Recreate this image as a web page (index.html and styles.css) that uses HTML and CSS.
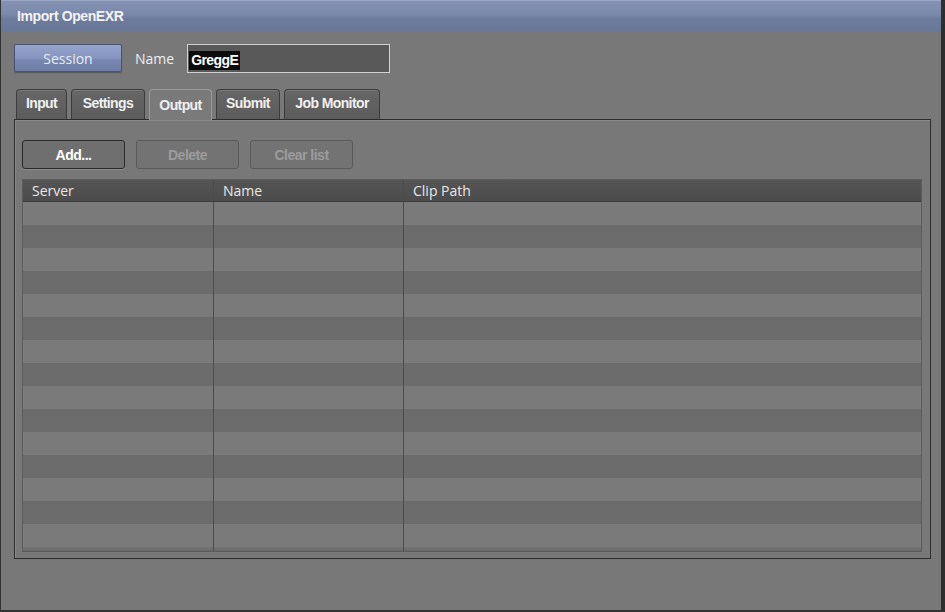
FILE: index.html
```html
<!DOCTYPE html>
<html>
  <head>
    <title>Import OpenEXR</title>
    <link rel="stylesheet" href="styles.css">
  </head>
  <body>
    <div class="window">
      <div class="titlebar">Import OpenEXR</div>

      <div class="session-row">
        <button class="session-btn">Session</button>
        <label class="name-label" for="name">Name</label>
        <div class="name-field"><span class="selected">GreggE</span></div>
      </div>

      <div class="tabs">
        <div class="tab tab-input">Input</div>
        <div class="tab tab-settings">Settings</div>
        <div class="tab tab-output active">Output</div>
        <div class="tab tab-submit">Submit</div>
        <div class="tab tab-monitor">Job Monitor</div>
      </div>

      <div class="panel">
        <div class="actions">
          <button class="btn">Add...</button>
          <button class="btn disabled">Delete</button>
          <button class="btn disabled">Clear list</button>
        </div>

        <div class="grid">
          <div class="grid-head">
            <div class="col col-server">Server</div>
            <div class="col col-name">Name</div>
            <div class="col col-path">Clip Path</div>
          </div>
          <div class="grid-body">
            <div class="row"><div class="col col-server"></div><div class="col col-name"></div><div class="col col-path"></div></div>
            <div class="row"><div class="col col-server"></div><div class="col col-name"></div><div class="col col-path"></div></div>
            <div class="row"><div class="col col-server"></div><div class="col col-name"></div><div class="col col-path"></div></div>
            <div class="row"><div class="col col-server"></div><div class="col col-name"></div><div class="col col-path"></div></div>
            <div class="row"><div class="col col-server"></div><div class="col col-name"></div><div class="col col-path"></div></div>
            <div class="row"><div class="col col-server"></div><div class="col col-name"></div><div class="col col-path"></div></div>
            <div class="row"><div class="col col-server"></div><div class="col col-name"></div><div class="col col-path"></div></div>
            <div class="row"><div class="col col-server"></div><div class="col col-name"></div><div class="col col-path"></div></div>
            <div class="row"><div class="col col-server"></div><div class="col col-name"></div><div class="col col-path"></div></div>
            <div class="row"><div class="col col-server"></div><div class="col col-name"></div><div class="col col-path"></div></div>
            <div class="row"><div class="col col-server"></div><div class="col col-name"></div><div class="col col-path"></div></div>
            <div class="row"><div class="col col-server"></div><div class="col col-name"></div><div class="col col-path"></div></div>
            <div class="row"><div class="col col-server"></div><div class="col col-name"></div><div class="col col-path"></div></div>
            <div class="row"><div class="col col-server"></div><div class="col col-name"></div><div class="col col-path"></div></div>
            <div class="row"><div class="col col-server"></div><div class="col col-name"></div><div class="col col-path"></div></div>
            <div class="row filler"><div class="col col-server"></div><div class="col col-name"></div><div class="col col-path"></div></div>
          </div>
        </div>
      </div>
    </div>
  </body>
</html>
```

FILE: styles.css
```css
html,
body {
  margin: 0;
  padding: 0;
  background-color: #2b2b2b;
}

.window {
  box-sizing: border-box;
  width: 945px;
  height: 612px;
  background-color: #787878;
  border-left: 1px solid #333;
  border-right: 4px solid #2e2e2e;
  border-bottom: 2px solid #333;
  font-family: "Open Sans", "Liberation Sans", sans-serif;
  color: #e6e6e6;
  overflow: hidden;
}

.titlebar {
  height: 31px;
  line-height: 30px;
  padding-left: 16px;
  background: linear-gradient(#8592b4 0%, #7a88aa 45%, #6c7a9c 60%, #6a7898 100%);
  border-top: 1px solid #9aa6c6;
  box-sizing: border-box;
  font-family: "Liberation Sans", sans-serif;
  font-weight: bold;
  font-size: 14px;
  color: #f4f4f4;
  letter-spacing: -0.4px;
}

.session-row {
  display: flex;
  align-items: center;
  margin-top: 13px;
  padding-left: 13px;
  height: 28px;
}

.session-btn {
  width: 108px;
  height: 28px;
  border: 1px solid #4a5470;
  border-radius: 2px;
  background: linear-gradient(#95a4cc 0%, #8595c0 50%, #7686b0 60%, #6e7ea6 100%);
  color: #e8ecf4;
  font-family: "Open Sans", sans-serif;
  font-size: 14px;
  padding: 0;
  box-shadow: 0 1px 1px #555;
}

.name-label {
  margin-left: 13px;
  margin-right: 13px;
  font-size: 14px;
  color: #eeeeee;
}

.name-field {
  box-sizing: border-box;
  width: 203px;
  height: 29px;
  border: 1px solid #d2d2d2;
  background-color: #595959;
  padding: 3px 0 0 1px;
}

.selected {
  display: inline-block;
  background-color: #0c0c0c;
  color: #ffffff;
  font-family: "Liberation Sans", sans-serif;
  font-weight: bold;
  font-size: 14px;
  line-height: 19px;
  padding: 0 2px;
  letter-spacing: -0.6px;
}

.tabs {
  display: flex;
  align-items: flex-end;
  margin-top: 16px;
  padding-left: 15px;
  height: 31px;
  gap: 4px;
}

.tab {
  box-sizing: border-box;
  height: 30px;
  line-height: 27px;
  text-align: center;
  font-family: "Liberation Sans", sans-serif;
  font-weight: bold;
  font-size: 14px;
  color: #f0f0f0;
  letter-spacing: -0.6px;
  background: linear-gradient(#666 0%, #5c5c5c 100%);
  border: 1px solid #3c3c3c;
  border-bottom: none;
  border-radius: 4px 4px 0 0;
  box-shadow: inset 0 1px 0 #7a7a7a;
}

.tab-input { width: 51px; }
.tab-settings { width: 74px; }
.tab-output { width: 63px; }
.tab-submit { width: 64px; }
.tab-monitor { width: 96px; }

.tab.active {
  height: 31px;
  background: #7a7a7a;
  border-color: #9a9a9a;
  box-shadow: none;
  margin-bottom: -1px;
  position: relative;
  line-height: 30px;
}

.panel {
  box-sizing: border-box;
  margin-left: 13px;
  width: 917px;
  height: 440px;
  border: 1px solid #2c2c2c;
  box-shadow: inset 1px 1px 0 #8a8a8a;
  padding: 20px 8px 0 7px;
}

.actions {
  display: flex;
  gap: 11px;
  height: 29px;
}

.btn {
  box-sizing: border-box;
  width: 103px;
  height: 29px;
  border: 1px solid #2a2a2a;
  border-radius: 3px;
  background: #6f6f6f;
  color: #ffffff;
  font-family: "Liberation Sans", sans-serif;
  font-weight: bold;
  font-size: 14px;
  letter-spacing: -0.5px;
  padding: 0;
  box-shadow: 0 1px 0 #8c8c8c;
}

.btn.disabled {
  border-color: #5a5a5a;
  color: #9c9c9c;
  background: #737373;
  box-shadow: none;
}

.grid {
  box-sizing: border-box;
  margin-top: 10px;
  width: 900px;
  height: 373px;
  border: 1px solid #5c5c5c;
  overflow: hidden;
}

.grid-head {
  display: flex;
  height: 22px;
  background: linear-gradient(#555 0%, #4b4b4b 100%);
  border-bottom: 1px solid #3e3e3e;
  box-sizing: border-box;
}

.grid-head .col {
  font-size: 14px;
  line-height: 21px;
  padding-left: 9px;
  color: #e8e8e8;
  box-sizing: border-box;
}

.col-server { width: 191px; }
.col-name { width: 190px; }
.col-path { flex: 1; }

.col-server,
.col-name {
  border-right: 1px solid #4c4c4c;
}

.grid-body .row {
  display: flex;
  height: 23px;
  background-color: #7a7a7a;
}

.grid-body .row:nth-child(even) {
  background-color: #6c6c6c;
}

.grid-body .col {
  box-sizing: border-box;
  height: 100%;
}

.grid-body .row.filler {
  height: 6px;
  background: linear-gradient(#747474 0%, #6a6a6a 60%, #5a5a5a 100%);
}
```
